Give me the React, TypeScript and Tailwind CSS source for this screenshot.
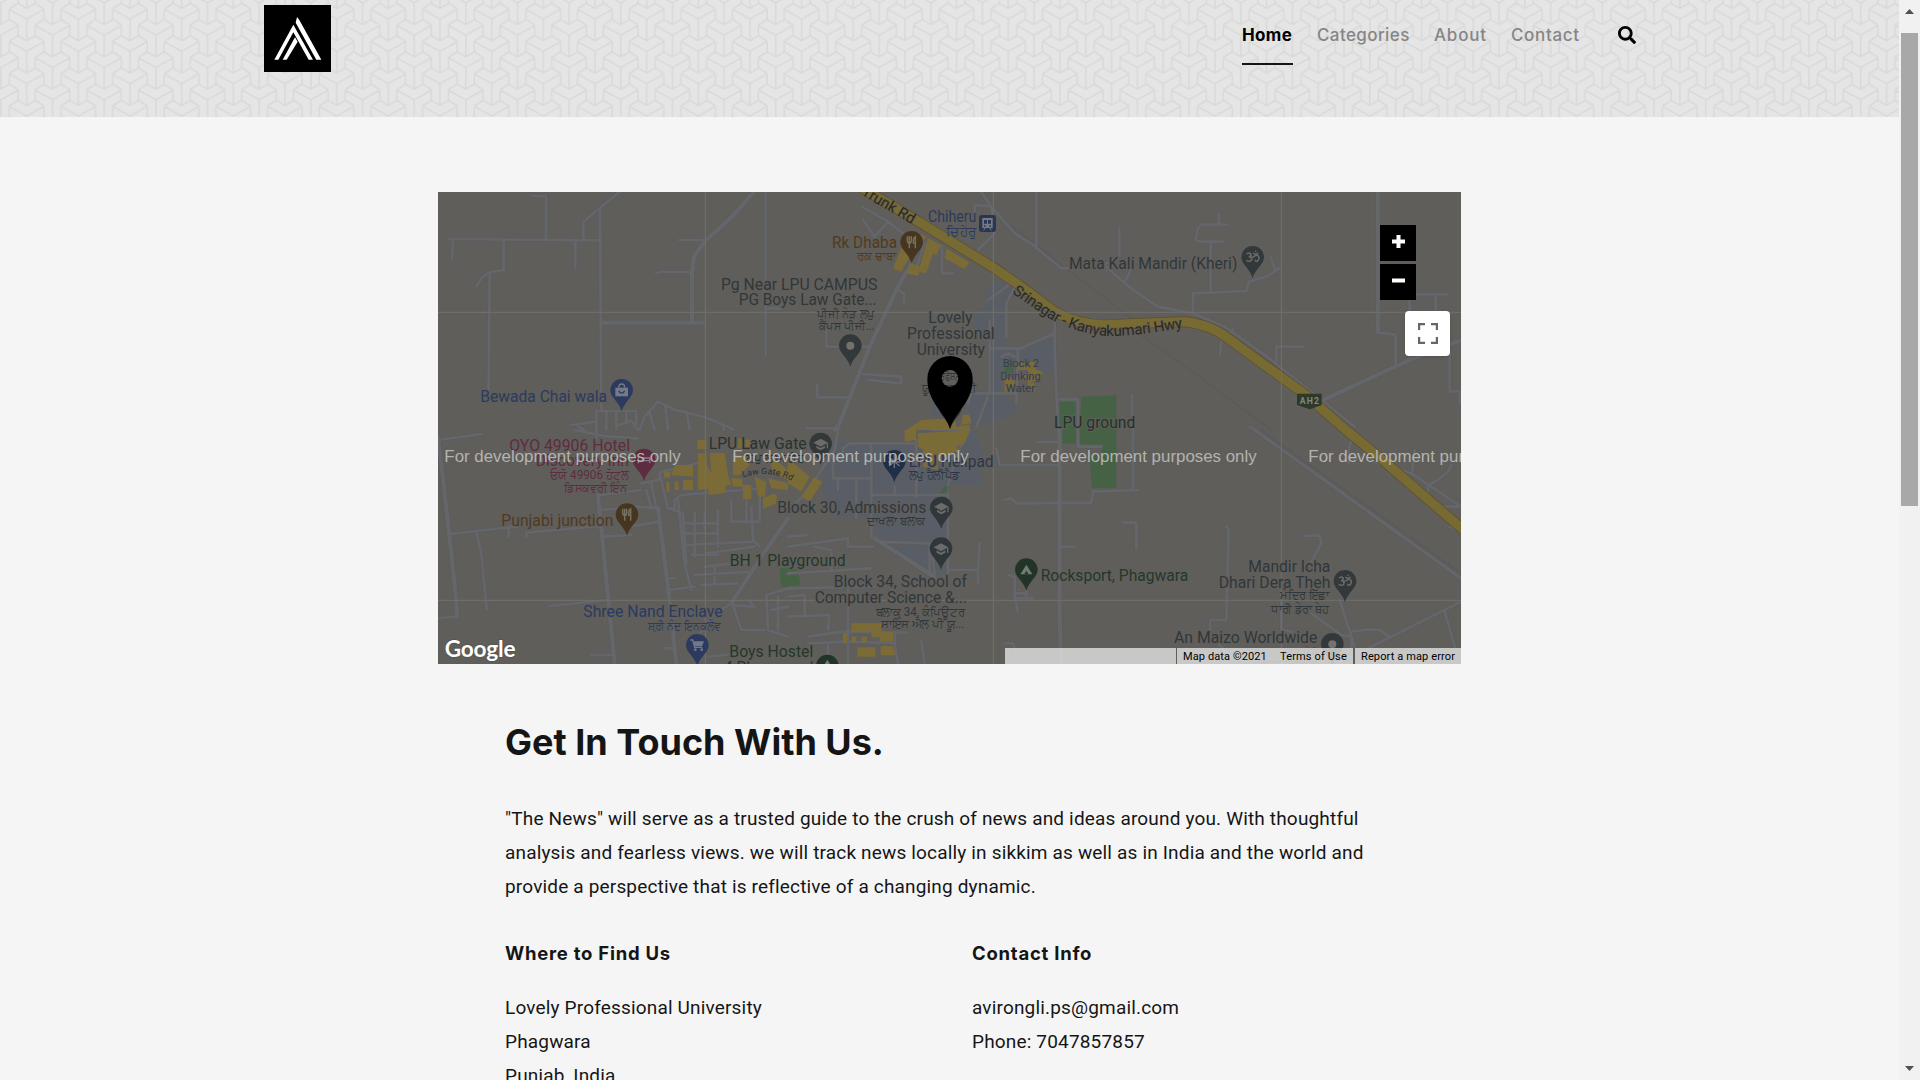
import type { ReactNode } from "react";
import { FaSearch } from "react-icons/fa";

const MAP_BG = "#605e5a";

/* Map geometry is kept at three units per pixel, in blocks of 1050 x 720 units. */
const roads: { x: number; y: number; d: string; w?: number }[] = [
  {
    x: 0,
    y: 0,
    d: "M30 147L490 151M486 55L490 660M544 6L436 95V147M285 17L324 20V147M412 151V235M46 150L42 208M197 150V240L155 247L132 262L116 288M155 250L152 600M722 150H802M654 250L668 246H762M983 6V497M983 355H1030M475 720V663H595V700M505 663V720M535 663V720M565 663V700M535 707L580 692L600 720M605 720L620 680L660 635L712 660L750 668L810 685L885 718M635 670L650 720M682 650L690 720M747 668L755 720M857 708V720M398 705L475 695M420 710L440 720",
  },
  { x: 0, y: 0, w: 12, d: "M948 6L880 82L802 153L768 198L762 245V398M490 398H800" },
  {
    x: 1050,
    y: 0,
    d: "M222 50L300 95L260 140L225 90M300 95L345 130M462 165V250H495M410 160L385 235M225 552L340 560V580L240 570M330 300L348 310V340M115 400V470H245M88 585V622H180M55 715H155M580 6L610 50L680 130L735 165L820 235H840M610 50L560 45V80M610 50L620 130L570 180M745 6V170M994 115V200L955 220M955 230L1010 280L1050 310M1010 280L1030 235M690 265L600 330M680 290L655 340V440M605 390V610M605 475H700L800 430M800 395V480L810 720M560 610H690M690 480L685 640M565 710L600 620M815 628H870V720M1032 615V680M550 610L540 640M640 500L660 490L680 500",
  },
  { x: 1050, y: 0, w: 12, d: "M370 220L330 290L245 470L155 700L140 720" },
  { x: 1050, y: 0, w: 9, d: "M300 40L400 110L520 165L600 215L690 270L800 365" },
  {
    x: 2100,
    y: 0,
    d: "M243 72V104M268 104H190L180 115L173 150L185 155H255M218 160V300M165 365V310L325 303L333 275L390 258L430 230M410 235L398 202M0 310L60 350L165 370L260 410L400 510L650 710M285 418L250 455L246 495M415 515V470H495M815 330V510M815 313H930M893 315V360M773 530V434L717 428M935 480V604H965V640M335 710L350 718",
  },
  { x: 2100, y: 0, w: 12, d: "M720 6V425M555 630L815 510L969 450" },
  {
    x: 0,
    y: 720,
    d: "M0 30L130 12M36 312L275 285M212 290V320M265 320V308L490 288M116 308L130 370L146 540M0 565L55 560M335 528L510 510M460 675H525M495 320L580 315M485 195L610 180M490 240L600 230L665 235M665 275L575 290M410 0L500 18L600 25M475 30L475 0M625 180L640 235M610 160L660 150L670 125L780 100M640 160L655 235M665 130L690 235L710 235V210L730 195L970 175M720 210L740 400L760 480M690 235L735 250L745 400M735 280H840M740 310H840M740 345L945 335M760 375H840M770 250V380M800 250V300M840 240V350M880 210V275H965M925 200V275M965 175V275M805 370L950 350M800 410L930 395M770 435L945 425M790 465L900 460M830 410V465M690 480L770 470M690 445H710M680 655H715M885 525L910 600H980M930 510L950 530L880 525M985 495L1050 475M985 495L990 600L1050 620M1000 540L1050 530M1020 500V600M940 230L945 330L965 350M780 620L820 560L880 520M810 680L900 670",
  },
  { x: 0, y: 720, w: 12, d: "M0 20L20 190L40 370L57 540V560M480 195L510 500L530 702M660 235L690 470L715 702M1050 265L970 380L880 520" },
  {
    x: 1050,
    y: 720,
    d: "M165 80V55L185 40H385V130M135 80V145H250M150 150V180M205 145V265M250 45V320M385 30V200M250 195H480M320 170V195M0 350L180 325V350H255M80 350L130 360V420M0 430L250 415M0 475L260 470M0 320L60 315M260 325L425 435V340M270 335L420 340M430 340L440 440M485 420L570 420L575 340M570 420V460M480 190V440M180 480V702M0 500L50 495V560M0 560L125 555L120 600M60 620L160 605L355 608M60 640L180 635L320 640V608M120 640V702M320 640L330 702M400 635L410 702M625 55L635 105L815 105M745 36H815M650 210L670 205L685 220L910 218L915 185L1050 180M820 350H860M1005 278H1045V355M1035 0V180M660 435L680 440V500L690 545M680 505H735M715 480V505M680 490H710M650 640L675 640L685 670M430 0L545 0L510 65L480 165M0 240L55 190L140 60L150 0M870 0V50H940",
  },
  { x: 1050, y: 720, w: 12, d: "M815 0V560L820 702M260 325L440 440" },
  {
    x: 2100,
    y: 720,
    d: "M265 290L272 300L265 570H217L215 615L280 680M497 318L545 316L550 340L520 395M640 30L632 60V100M830 60L822 130M940 105L930 125L900 150L870 165V185M710 95L820 130L969 230M920 230H969M935 290L969 300M430 500V600L465 605M520 550L610 615L640 620V650M605 510L650 650M640 605L690 598L725 600L755 620M600 700L969 515M920 545L950 650",
  },
  { x: 2100, y: 720, w: 9, d: "M350 0L969 445" },
];

const thin: { x: number; y: number; d: string }[] = [
  { x: 1050, y: 0, d: "M230 0L420 105L520 160L640 240M600 50L720 145L840 240L1050 400" },
  { x: 2100, y: 0, d: "M0 430L130 520L250 610L400 720" },
  { x: 2100, y: 720, d: "M370 0L969 430" },
];

const campus = [
  { x: 1050, y: 0, d: "M610 280L650 270L700 300L655 340V470H700L800 430V540L745 560H640V610L690 650V665L620 700H545V650L433 680V625H500L555 615H610V470L555 410V365L590 350L595 310Z" },
  { x: 1050, y: 720, d: "M110 40L165 30L190 40H385L400 0H560L580 60V165H485L480 320L475 425L430 435L300 345H420V335H280L260 320V265H140L105 190Z" },
];

const buildings = [
  { x: 1050, y: 0, d: "M345 160L380 175L340 245L315 235ZM420 145L460 165L445 195L435 190L415 250L395 245L390 258L355 250L370 220L395 230ZM475 175L545 218L530 238L470 205ZM375 120L415 140L405 152L370 135ZM690 515H740L745 540L765 545L755 570L720 580V570H690V555H720V540H690ZM650 565H680V605H650ZM720 580H740V605H720ZM355 720L400 690L500 685L505 710L545 705V720ZM525 675H545L550 700L520 705Z" },
  { x: 1050, y: 720, d: "M350 0H385V30L350 35ZM390 10L545 0L530 40L505 50L515 65L480 70L470 90L450 95V120L405 110V60L390 50ZM0 85L65 140L40 185L0 160ZM78 142L103 155L65 215L40 200ZM190 580H280V606H190ZM250 606H315V635H275V622H250ZM165 610H177V640H165ZM190 620H205V637H190ZM220 620H237V637H220ZM208 652H262V680H208ZM278 648H315L322 676H278Z" },
  { x: 0, y: 720, d: "M778 30H805V57H778ZM900 25L940 30L945 55H900ZM780 70H805L808 110L820 130L870 135L880 165H865L860 190L815 195L810 178L780 180ZM815 70L860 68L870 135L820 130ZM885 70L925 80L935 105L905 135H885ZM880 145H910L915 165L940 165V207H915V170H885ZM950 140L985 155L980 200H960ZM990 145L1050 160V180L1000 175ZM677 125H697V143H677ZM710 105H765V140L700 135ZM735 150H765V180H735ZM710 155H722V180H710ZM685 155H694V185H685ZM975 205L1010 190L1018 200L1012 222L975 236ZM1000 80L1050 120V150L1000 120Z" },
];

const parks = [
  { x: 1050, y: 0, d: "M815 635H862V720H815ZM880 620L985 616V720H875ZM650 520L675 510V545L650 555Z" },
  { x: 1050, y: 720, d: "M820 0H985V175H912L905 80L940 75V45L820 40ZM0 410L30 420L38 465L0 472ZM455 190L480 155L475 190ZM420 240L440 225V245Z" },
  { x: 0, y: 720, d: "M1025 415H1050V472H1028Z" },
];

function Label({
  x,
  y,
  len,
  size = 47,
  fill = "#30373a",
  end,
  children,
}: {
  x: number;
  y: number;
  len: number;
  size?: number;
  fill?: string;
  end?: boolean;
  children: ReactNode;
}) {
  return (
    <text
      x={x}
      y={y + 1}
      textAnchor={end ? "end" : "start"}
      textLength={len}
      lengthAdjust="spacingAndGlyphs"
      fontSize={size}
      fill={fill}
      stroke={MAP_BG}
      strokeWidth={size < 40 ? 2 : 6}
      paintOrder="stroke"
    >
      {children}
    </text>
  );
}

function Pin({ x, y, fill, children }: { x: number; y: number; fill: string; children?: ReactNode }) {
  return (
    <g transform={`translate(${x} ${y})`}>
      <path d="M-34 0A34 34 0 1 1 34 0C34 22 8 34 0 63C-8 34 -34 22 -34 0Z" fill={fill} />
      {children}
    </g>
  );
}

const GLYPH = "#6b6b69";
const Fork = () => (
  <path d="M-13 -18V-5Q-13 2 -7 2V18M-7 -18V0M-1 -18V-5Q-1 2 -7 2M11 18V-17Q4 -14 5 2H11" stroke="#77705f" strokeWidth="4.5" fill="none" />
);
const Cap = () => (
  <>
    <path d="M-22 -4L0 -16L22 -4L0 8Z" fill={GLYPH} />
    <path d="M-13 5V12L0 19L13 12V5L0 12ZM18 -2H22V13H18Z" fill={GLYPH} />
  </>
);
const Om = () => (
  <path
    d="M-18 -10Q-9 -17 -5 -9Q-5 -2 -12 -2Q-2 -2 -3 7Q-8 16 -19 9M-5 -1Q2 1 6 -4Q12 -9 18 -3Q21 5 15 11Q9 14 7 7M1 -13Q8 -6 17 -13M9 -20V-16"
    stroke={GLYPH}
    strokeWidth="4.5"
    fill="none"
  />
);

const HIGHWAY =
  "M1265 -10L1450 100L1670 235L1750 290L1850 365Q1920 405 2000 405L2100 400L2240 395Q2320 405 2370 445L2470 518L2600 612L2730 725L2840 815L2980 937L3080 1022";

function MapCanvas() {
  const slate = "#30373b";
  const grey = "#33383a";
  const blue = "#2b3a5e";
  const green = "#23382b";
  const brown = "#503a20";
  const rose = "#5e2c40";
  return (
    <svg className="block h-full w-full" viewBox="0 6 3069 1416" preserveAspectRatio="none" fontFamily="Roboto, 'Noto Sans', sans-serif">
      <rect y="6" width="3069" height="1416" fill={MAP_BG} />
      {campus.map((s, i) => (
        <path key={i} d={s.d} transform={`translate(${s.x} ${s.y})`} fill="#595e66" />
      ))}
      {parks.map((s, i) => (
        <path key={i} d={s.d} transform={`translate(${s.x} ${s.y})`} fill="#456344" />
      ))}
      {thin.map((s, i) => (
        <path key={i} d={s.d} transform={`translate(${s.x} ${s.y})`} fill="none" stroke="#55575b" strokeWidth="2.5" />
      ))}
      <g fill="none" strokeLinecap="round" strokeLinejoin="round">
        {roads.map((s, i) => (
          <path key={i} d={s.d} transform={`translate(${s.x} ${s.y})`} stroke="#5b5c60" strokeWidth={(s.w ?? 8) + 4} />
        ))}
        {roads.map((s, i) => (
          <path key={i} d={s.d} transform={`translate(${s.x} ${s.y})`} stroke="#656669" strokeWidth={s.w ?? 8} />
        ))}
      </g>
      {buildings.map((s, i) => (
        <path key={i} d={s.d} transform={`translate(${s.x} ${s.y})`} fill="#7b6b37" />
      ))}
      <path d={HIGHWAY} fill="none" stroke="#5b4f2e" strokeWidth="32" />
      <path d={HIGHWAY} fill="none" stroke="#776a32" strokeWidth="28" />
      <path d="M802 6V1422M1666 6V1422M2530 6V1422M0 367H3069M0 1231H3069" stroke="#71706c" strokeWidth="3" />

      <Label x={127} y={634} len={380} fill={blue}>Bewada Chai wala</Label>
      <Pin x={551} y={601} fill={blue}>
        <path d="M-9 -8Q-9 -19 0 -19Q9 -19 9 -8" fill="none" stroke="#747a87" strokeWidth="4" />
        <path d="M-19 -8H19V18H-19Z" fill="#747a87" />
        <path d="M-9 2Q0 15 9 2" fill="none" stroke={blue} strokeWidth="4" />
      </Pin>
      <Label x={849} y={298} len={469}>Pg Near LPU CAMPUS</Label>
      <Label x={902} y={345} len={414}>PG Boys Law Gate...</Label>
      <Label x={1309} y={383} len={172} size={36} end>ਪੀਜੀ ਨੇੜ ਲਪੁ</Label>
      <Label x={1309} y={420} len={166} size={36} end>ਕੈਂਪਸ ਪੀਜੀ...</Label>
      <Pin x={1237} y={467} fill={grey}><circle r="12" fill="#73726f" /></Pin>

      <Label x={1182} y={172} len={195} fill={brown}>Rk Dhaba</Label>
      <Label x={1373} y={209} len={115} size={35} fill={brown} end>ਰਕ ਢਾਬਾ</Label>
      <Pin x={1421} y={157} fill="#46351f"><Fork /></Pin>
      <Label x={1470} y={96} len={145} fill={blue}>Chiheru</Label>
      <Label x={1615} y={136} len={90} size={38} fill={blue} end>ਚਿਹੇਰੁ</Label>
      <rect x="1623" y="75" width="51" height="51" rx="8" fill="#2a3653" />
      <path d="M1633 84H1664V114H1633Z" fill="#777b84" />
      <path d="M1638 90H1647V101H1638ZM1650 90H1659V101H1650ZM1638 106H1643V110H1638ZM1654 106H1659V110H1654Z" fill="#2a3653" />
      <path d="M1637 121L1643 112M1660 121L1654 112" stroke="#777b84" strokeWidth="3" />
      <g fontSize="45" fill="#2b2921" stroke={MAP_BG} strokeWidth="3" paintOrder="stroke">
        <path id="trunk" d="M1268 13L1460 125" fill="none" stroke="none" />
        <text textLength="178"><textPath href="#trunk">Trunk Rd</textPath></text>
        <path id="hwy" d="M1722 309L1830 383Q1900 425 2000 438Q2110 440 2290 402" fill="none" stroke="none" />
        <text textLength="547"><textPath href="#hwy">Srinagar - Kanyakumari Hwy</textPath></text>
      </g>
      <Label x={1893} y={236} len={505}>Mata Kali Mandir (Kheri)</Label>
      <Pin x={2444} y={202} fill={grey}><Om /></Pin>

      <Label x={1471} y={399} len={132}>Lovely</Label>
      <Label x={1407} y={447} len={263}>Professional</Label>
      <Label x={1436} y={495} len={205}>University</Label>
      <Label x={1490} y={570} len={92} size={34}>ਪ੍ਰੋਫੈਸ਼ਨਲ</Label>
      <Label x={1453} y={605} len={163} size={36}>ਯੂਨੀਵਰਸਿਟੀ</Label>
      <Pin x={1537} y={654} fill={grey} />
      <Label x={1694} y={531} len={109} size={33} fill="#363e4e">Block 2</Label>
      <Label x={1687} y={569} len={121} size={33} fill="#363e4e">Drinking</Label>
      <Label x={1703} y={605} len={88} size={33} fill="#363e4e">Water</Label>
      <Label x={1848} y={714} len={244} fill="#25322a">LPU ground</Label>
      <path d="M2577 611H2651V645L2615 658L2577 645Z" fill="#2c3a29" />
      <text x="2585" y="643" fontSize="26" fontWeight="700" textLength="58" fill="#848780">AH2</text>

      <Label x={214} y={781} len={362} fill={rose}>OYO 49906 Hotel</Label>
      <Label x={293} y={828} len={280} fill={rose}>Discovery Inn</Label>
      <Label x={571} y={866} len={236} size={36} fill={rose} end>ਓਯੋ 49906 ਹੋਟਲ</Label>
      <Label x={567} y={904} len={190} size={36} fill={rose} end>ਡਿਸਕਵਰੀ ਇੰਨ</Label>
      <Pin x={618} y={810} fill={rose}><path d="M-17 -12V10M-17 2H17V10M17 2V-6H-4V2" stroke="#8a7980" strokeWidth="4" fill="none" /></Pin>
      <Label x={190} y={1008} len={336} fill={brown}>Punjabi junction</Label>
      <Pin x={567} y={974} fill="#46351f"><Fork /></Pin>

      <Label x={812} y={776} len={294} fill="#2b3230">LPU Law Gate</Label>
      <Label x={1100} y={815} len={175} size={34} fill="#2b3230" end>ਲਪੁ ਲਾਅ ਗੇਟ</Label>
      <path id="gate" d="M915 862Q1010 835 1075 882" fill="none" />
      <text fontSize="26" fill="#2b3035" textLength="150"><textPath href="#gate">Law Gate Rd</textPath></text>
      <Pin x={1148} y={762} fill={grey}><Cap /></Pin>
      <Pin x={1369} y={814} fill="#202e48"><path d="M-16 -12L16 14M16 -12L-16 14M0 -20V20M-18 2H18" stroke="#6d737d" strokeWidth="4" /></Pin>
      <Label x={1412} y={829} len={255} fill="#2a364e">LPU Helipad</Label>
      <Label x={1412} y={865} len={154} size={36} fill="#2a364e">ਲਪੁ ਹੈਲੀਪੈਡ</Label>
      <Label x={1018} y={968} len={447}>Block 30, Admissions</Label>
      <Label x={1462} y={1004} len={174} size={36} end>ਦਾਖਲਾ ਬਲਾਕ</Label>
      <Pin x={1510} y={954} fill={slate}><Cap /></Pin>
      <Label x={875} y={1127} len={348} fill={green}>BH 1 Playground</Label>
      <Pin x={1509} y={1076} fill={slate}><Cap /></Pin>
      <Label x={1187} y={1191} len={400}>Block 34, School of</Label>
      <Label x={1130} y={1238} len={457}>Computer Science &...</Label>
      <Label x={1579} y={1277} len={266} size={36} end>ਬਲਾਕ 34, ਕੰਪਿਊਟਰ</Label>
      <Label x={1579} y={1314} len={250} size={36} end>ਸਾਇੰਸ ਐਲ ਪੀ ਯੂ...</Label>
      <Label x={1808} y={1173} len={443} fill={green}>Rocksport, Phagwara</Label>
      <Pin x={1765} y={1139} fill="#223427"><path d="M-18 14L0 -15L18 14ZM-6 13L0 3L6 13Z" fill="#6f7c71" fillRule="evenodd" /></Pin>

      <Label x={436} y={1281} len={418} fill={blue}>Shree Nand Enclave</Label>
      <Label x={848} y={1319} len={218} size={36} fill={blue} end>ਸ਼੍ਰੀ ਨੰਦ ਇਨਕਲੇਵ</Label>
      <Pin x={778} y={1366} fill={blue}>
        <path d="M-21 -16H-14L-8 6H15" fill="none" stroke="#727987" strokeWidth="4" />
        <path d="M-12 -12H20L14 3H-8Z" fill="#727987" />
        <circle cx="-6" cy="13" r="4" fill="#727987" />
        <circle cx="13" cy="13" r="4" fill="#727987" />
      </Pin>
      <Label x={874} y={1400} len={252} fill={green}>Boys Hostel</Label>
      <Label x={858} y={1448} len={268} fill={green}>4 Playground</Label>
      <Pin x={1168} y={1428} fill="#223427"><path d="M-17 9L0 -19L17 9Z" fill="#6f7c71" /></Pin>
      <Label x={2431} y={1146} len={246}>Mandir Icha</Label>
      <Label x={2342} y={1193} len={335}>Dhari Dera Theh</Label>
      <Label x={2672} y={1227} len={145} size={35} end>ਮੰਦਿਰ ਇੱਛਾ</Label>
      <Label x={2672} y={1267} len={172} size={35} end>ਧਾਰੀ ਡੇਰਾ ਥੇਹ</Label>
      <Pin x={2721} y={1174} fill={grey}><Om /></Pin>
      <Label x={2208} y={1358} len={430}>An Maizo Worldwide</Label>
      <Pin x={2683} y={1363} fill={grey}><circle r="12" fill="#73726f" /></Pin>
      <Label x={2640} y={1396} len={90} size={33} fill="#4c4e4e" end>ਆਂ ਮੇਜ਼ੋ</Label>
      <Label x={2632} y={1432} len={165} size={33} fill="#4c4e4e" end>ਵਰਲਡਵਾਈਡ</Label>

      <path
        d="M1536 717C1524 668 1468 640 1468 566A68 68 0 1 1 1604 566C1604 640 1548 668 1536 717ZM1511 565A25 25 0 1 0 1561 565A25 25 0 1 0 1511 565Z"
        fill="#000"
        fillRule="evenodd"
      />
      <g fill="#b4b3b1" fontFamily="'Liberation Sans', Arial, sans-serif" fontSize="49">
        {[19, 883, 1747, 2611].map((x) => (
          <text key={x} x={x} y="816" textLength="709" lengthAdjust="spacingAndGlyphs">For development purposes only</text>
        ))}
      </g>
      <text x="20" y="1400" fontFamily="Lato, sans-serif" fontSize="68" fontWeight="700" textLength="213" fill="#fff" stroke="#55534f" strokeWidth="5" paintOrder="stroke">
        Google
      </text>
    </svg>
  );
}

function HeaderPattern() {
  const cell =
    "M28 28L80 57L132 28M28 28V58L54 75M54 107L80 122L106 107M80 57V122M132 28V58L106 75";
  return (
    <svg className="absolute inset-0 h-full w-full">
      <defs>
        <pattern id="cubes" width="155" height="97" patternUnits="userSpaceOnUse" patternTransform="scale(.3333)">
          <g fill="none" stroke="#d9d9d9" strokeWidth="4.5">
            {[-155, 0, 155].map((x) =>
              [-97, 0, 97].map((y) => (
                <g key={`${x}/${y}`}>
                  <path d={cell} transform={`translate(${x} ${y})`} />
                  <path d={cell} transform={`translate(${x + 77.5} ${y + 48.5})`} />
                </g>
              )),
            )}
          </g>
        </pattern>
      </defs>
      <rect width="100%" height="100%" fill="url(#cubes)" />
    </svg>
  );
}

function Header() {
  return (
    <header className="relative h-[117px] bg-[#e5e5e5]">
      <HeaderPattern />
      <div className="relative flex items-start justify-between pl-[264px] pr-[263px] pt-[5px]">
        <svg className="h-[67px] w-[67px] bg-black" viewBox="0 0 201 201">
          <path d="M99 36L106 45L172 164H157L95 53ZM31 164L88 59L147 164H134L88 82L43 164ZM56 164L93 97L101 110L68 164Z" fill="#fff" />
        </svg>
        <nav className="flex items-start font-['Inter'] text-[17px] font-medium leading-[28px] text-[#858585]">
          <a className="mr-6 w-[51px] whitespace-nowrap border-b-2 border-[#151515] pb-[14px] pt-4 text-[17px] font-bold tracking-[0.35px] text-black">Home</a>
          <a className="mr-[25px] w-[92px] whitespace-nowrap pt-4 tracking-[0.4px]">Categories</a>
          <a className="mr-6 w-[53px] whitespace-nowrap pt-4 tracking-[0.8px]">About</a>
          <a className="mr-[39px] w-[68px] whitespace-nowrap pt-4 tracking-[0.65px]">Contact</a>
          <FaSearch className="mt-[21px] h-[18px] w-[18px] text-black" />
        </nav>
      </div>
    </header>
  );
}

function ContactMap() {
  return (
    <section className="relative ml-[438px] mt-[75px] h-[472px] w-[1023px] overflow-hidden">
      <MapCanvas />
      <div className="absolute left-[942px] top-[33px] flex flex-col gap-[3px]">
        <button className="flex h-9 w-9 items-center justify-center bg-black">
          <svg className="-mt-[3px] h-[13px] w-[13px]" viewBox="0 0 13 13"><path d="M0 6.5H13M6.5 0V13" stroke="#fff" strokeWidth="4" /></svg>
        </button>
        <button className="flex h-9 w-9 items-center justify-center bg-black">
          <svg className="-mt-[3px] h-[13px] w-[13px]" viewBox="0 0 13 13"><path d="M0 6.5H13" stroke="#fff" strokeWidth="4" /></svg>
        </button>
      </div>
      <button className="absolute left-[967px] top-[119px] flex h-[45px] w-[45px] items-center justify-center rounded-sm bg-white shadow">
        <svg className="h-[21px] w-[20px]" viewBox="0 0 20 21">
          <path d="M1 7V1H7M13 1H19V7M19 14V20H13M7 20H1V14" fill="none" stroke="#666" strokeWidth="2.4" />
        </svg>
      </button>
      <div className="absolute bottom-0 right-0 flex h-4 w-[456px] justify-end bg-[#f5f5f5]/70 font-['Roboto'] text-[11px] leading-[17px] text-black">
        <span className="w-[104px] whitespace-nowrap border-l border-[#605e5a] pl-1.5 tracking-[0.1px]">Map data ©2021</span>
        <span className="w-[73px] whitespace-nowrap tracking-[0.15px]">Terms of Use</span>
        <span className="w-[108px] whitespace-nowrap border-l-2 border-[#605e5a] pl-1.5 tracking-[0.12px]">Report a map error</span>
      </div>
    </section>
  );
}

export default function App() {
  return (
    <div className="flex h-[1080px] w-[1920px] overflow-hidden bg-[#f5f5f5]">
      <main className="w-[1899px] overflow-hidden">
        <Header />
        <ContactMap />
        <section className="ml-[505px] w-[900px] font-['Roboto'] text-[19px] leading-[34px] text-[#151515]">
          <h1 className="mt-[54px] whitespace-nowrap font-['Inter'] text-[36px] font-bold leading-[48px]">Get In Touch With Us.</h1>
          <p className="mt-[36px] whitespace-nowrap tracking-[0.17px]">
            "The News" will serve as a trusted guide to the crush of news and ideas around you. With thoughtful
            <br />
            analysis and fearless views. we will track news locally in sikkim as well as in India and the world and
            <br />
            provide a perspective that is reflective of a changing dynamic.
          </p>
          <div className="mt-[32px] grid grid-cols-[467px_1fr]">
            <div>
              <h2 className="mb-[21px] font-['Inter'] text-[18.5px] font-bold tracking-[0.75px]">Where to Find Us</h2>
              <p className="tracking-[0.17px]">Lovely Professional University<br />Phagwara<br />Punjab, India</p>
            </div>
            <div>
              <h2 className="mb-[21px] font-['Inter'] text-[18.5px] font-bold tracking-[0.75px]">Contact Info</h2>
              <p className="tracking-[0.17px]">avirongli.ps@gmail.com<br />Phone: 7047857857</p>
            </div>
          </div>
        </section>
      </main>
      <aside className="flex w-[21px] flex-col items-center justify-between bg-[#f1f1f1] py-[9px]">
        <div className="flex flex-col items-center">
          <svg className="h-[5px] w-[9px]" viewBox="0 0 9 5"><path d="M0 5L4.5 0L9 5Z" fill="#505050" /></svg>
          <div className="mt-[19px] h-[473px] w-[17px] bg-[#a8a8a8]" />
        </div>
        <svg className="h-[5px] w-[9px]" viewBox="0 0 9 5"><path d="M0 0L4.5 5L9 0Z" fill="#505050" /></svg>
      </aside>
    </div>
  );
}
